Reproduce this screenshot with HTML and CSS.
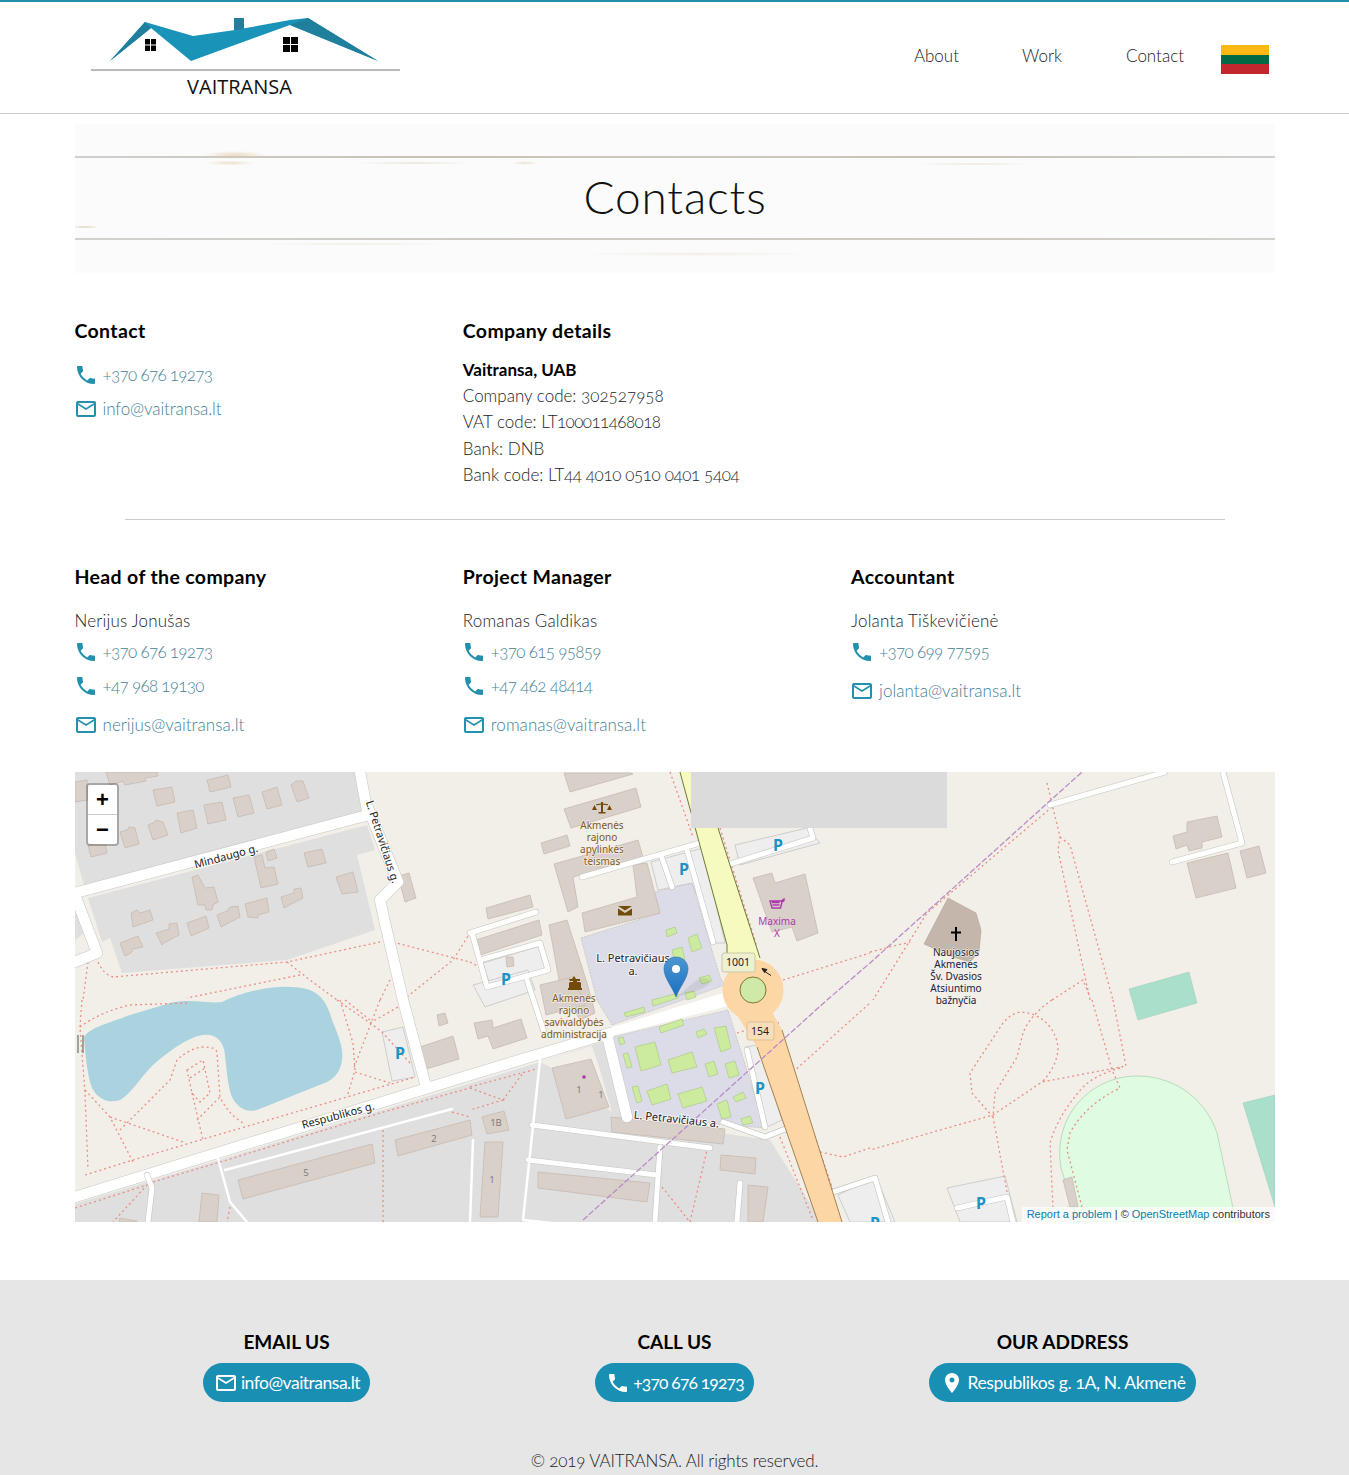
FILE: index.html
```html
<!DOCTYPE html>
<html lang="en">
<head>
<meta charset="utf-8">
<title>Contacts - Vaitransa</title>
<link rel="stylesheet" href="styles.css">
</head>
<body>
<svg class="defs" aria-hidden="true">
  <symbol id="i-phone" viewBox="0 0 24 24"><path d="M6.62 10.79c1.44 2.83 3.76 5.14 6.59 6.59l2.2-2.2c.27-.27.67-.36 1.02-.24 1.12.37 2.33.57 3.57.57.55 0 1 .45 1 1V20c0 .55-.45 1-1 1-9.39 0-17-7.61-17-17 0-.55.45-1 1-1h3.5c.55 0 1 .45 1 1 0 1.25.2 2.45.57 3.57.11.35.03.74-.25 1.02l-2.2 2.2z"/></symbol>
  <symbol id="i-mail" viewBox="0 0 24 24"><path d="M20 4H4c-1.1 0-1.99.9-1.99 2L2 18c0 1.1.9 2 2 2h16c1.1 0 2-.9 2-2V6c0-1.1-.9-2-2-2zm0 14H4V8l8 5 8-5v10zm-8-7L4 6h16l-8 5z"/></symbol>
  <symbol id="i-place" viewBox="0 0 24 24"><path d="M12 2C8.13 2 5 5.13 5 9c0 5.25 7 13 7 13s7-7.75 7-13c0-3.87-3.13-7-7-7zm0 9.5c-1.38 0-2.5-1.12-2.5-2.5s1.12-2.5 2.5-2.5 2.5 1.12 2.5 2.5-1.12 2.5-2.5 2.5z"/></symbol>
</svg>

<header class="site-header">
  <a class="logo" href="#">
    <svg class="logo-svg" viewBox="85 12 325 92" role="img" aria-label="Vaitransa">
      <rect class="logo-dark" x="234" y="18" width="10" height="13"/>
      <polygon class="logo-roof" points="145,22 193,36 235,30 290,20 308,18 378,61 290,25 191,61 151,28 110,61"/>
      <polygon class="logo-dark" points="110,61 145,22 151,28"/>
      <polygon class="logo-dark" points="290,25 308,18 378,61"/>
      <path class="logo-win" d="M145 39h5v5.500h-5zM151 39h5v5.500h-5zM145 45.500h5v5.500h-5zM151 45.500h5v5.500h-5zM283 37h7v7h-7zM291 37h7v7h-7zM283 45h7v7h-7zM291 45h7v7h-7z"/>
      <line class="logo-line" x1="91" y1="70" x2="400" y2="70"/>
      <text class="logo-text" x="239.500" y="94">VAITRANSA</text>
    </svg>
  </a>
  <nav class="nav">
    <a class="nav-link" href="#">About</a>
    <a class="nav-link" href="#">Work</a>
    <a class="nav-link" href="#">Contact</a>
    <span class="flag"><i class="flag-y"></i><i class="flag-g"></i><i class="flag-r"></i></span>
  </nav>
</header>

<main class="page">
  <section class="hero"><h1 class="hero-title">Contacts</h1></section>

  <section class="grid grid-top">
    <div class="col">
      <h3 class="col-title">Contact</h3>
      <a class="line line-num" href="#"><svg class="ico"><use href="#i-phone"/></svg>+370 676 19273</a>
      <a class="line" href="#"><svg class="ico"><use href="#i-mail"/></svg>info@vaitransa.lt</a>
    </div>
    <div class="col col-wide">
      <h3 class="col-title">Company details</h3>
      <p class="details"><strong>Vaitransa, UAB</strong><br>Company code: 302527958<br>VAT code: <span class="n-a">LT100011468018</span><br>Bank: DNB<br>Bank code: <span class="n-b">LT44 4010 0510 0401 5404</span></p>
    </div>
  </section>

  <hr class="divider">

  <section class="grid">
    <div class="col">
      <h3 class="col-title">Head of the company</h3>
      <p class="person">Nerijus Jonušas</p>
      <a class="line line-num" href="#"><svg class="ico"><use href="#i-phone"/></svg>+370 676 19273</a>
      <a class="line line-num" href="#"><svg class="ico"><use href="#i-phone"/></svg>+47 968 19130</a>
      <a class="line line-mail" href="#"><svg class="ico"><use href="#i-mail"/></svg>nerijus@vaitransa.lt</a>
    </div>
    <div class="col">
      <h3 class="col-title">Project Manager</h3>
      <p class="person">Romanas Galdikas</p>
      <a class="line line-num" href="#"><svg class="ico"><use href="#i-phone"/></svg>+370 615 95859</a>
      <a class="line line-num" href="#"><svg class="ico"><use href="#i-phone"/></svg>+47 462 48414</a>
      <a class="line line-mail" href="#"><svg class="ico"><use href="#i-mail"/></svg>romanas@vaitransa.lt</a>
    </div>
    <div class="col">
      <h3 class="col-title">Accountant</h3>
      <p class="person">Jolanta Tiškevičienė</p>
      <a class="line line-num" href="#"><svg class="ico"><use href="#i-phone"/></svg>+370 699 77595</a>
      <a class="line line-mail" href="#"><svg class="ico"><use href="#i-mail"/></svg>jolanta@vaitransa.lt</a>
    </div>
  </section>

  <section class="map">
    <svg class="map-svg" viewBox="75 772 1200 450" role="img" aria-label="Map">
      <rect class="m-land" x="75" y="772" width="1200" height="450"/>
      <!-- residential -->
      <polygon class="m-res" points="75,772 358,772 366,815 85,889 75,853"/>
      <polygon class="m-res" points="88,898 367,825 375,850 357,855 375,930 287,960 122,973 110,938 102,942"/>
      <polygon class="m-res" points="75,1204 540,1062 608,1040 630,1120 770,1140 822,1222 75,1222"/>
      <polygon class="m-res" points="75,893 88,930 75,940"/>
      <polygon class="m-land" points="540,1062 592,1046 600,1070 612,1112 552,1068"/>
      <!-- institutional -->
      <polygon class="m-inst" points="581,938 660,913 655,892 692,883 720,977 725,985 612,1025 597,1000"/>
      <polygon class="m-inst" points="612,1037 728,1010 765,1128 630,1117"/>
      <!-- water & sport -->
      <path class="m-water" d="M84 1037C90 1028 103 1025 130 1015L170 1003C190 998 210 1004 222 1002C245 990 285 982 310 990C322 995 328 1005 332 1020C338 1035 344 1048 342 1060C340 1074 333 1080 322 1084L257 1110C246 1113 238 1108 232 1097C227 1085 226 1058 224 1049C221 1038 212 1034 204 1035C190 1036 170 1050 152 1066C140 1078 130 1095 120 1100C108 1104 98 1099 92 1088C87 1075 85 1050 84 1037Z"/>
      <path class="m-stadium" d="M1078 1222L1061 1168C1052 1115 1092 1076 1137 1076C1180 1076 1208 1105 1217 1133L1236 1222Z"/>
      <polygon class="m-pitch" points="1129,989 1189,972 1197,1003 1138,1020"/>
      <polygon class="m-pitch" points="1243,1103 1275,1095 1275,1207"/>
      <!-- parking -->
      <g class="m-lot">
        <polygon points="382,1032 403,1027 415,1077 392,1081"/>
        <polygon points="483,963 540,946 546,968 490,985"/>
        <polygon points="473,985 528,970 535,990 485,1007"/>
        <polygon points="735,845 807,828 820,843 740,865"/>
        <polygon points="651,862 703,848 725,943 715,943 692,883 658,890"/>
        <polygon points="745,1047 758,1045 782,1120 765,1128"/>
        <polygon points="947,1188 1005,1176 1017,1222 960,1222"/>
        <polygon points="838,1195 876,1177 895,1222 850,1222"/>
      </g>
      <!-- footways -->
      <path class="m-path" d="M98 962Q104 975 113 977L287 962L380 942M393 942L470 962M407 997L453 960L470 933M287 962L310 980L337 1000M300 975L187 998M88 962L83 1000M390 980L380 1000M82 1000L80 1027L85 1093L88 1170M80 1027Q100 1012 130 1005L187 1003M85 1090L110 1117L133 1162M110 1117L183 1142M120 1130L170 1080L177 1060Q190 1048 203 1047Q217 1047 217 1053L220 1097Q228 1114 243 1123M187 1070L203 1060L210 1093L200 1102L192 1093Z M190 1078L205 1068M192 1093L203 1140M197 1120L220 1097M85 1175L133 1160L207 1138L347 1097L415 1077M340 1000L353 1043L355 1070L347 1097M355 1072L390 1083M380 1000L353 1070M337 1000L370 1023L382 1032L410 1063M370 1023L398 1007M153 1182L217 1163L380 1113L470 1088M75 1208L147 1185L113 1222M383 1130L383 1222M230 1207L227 1222M452 1112L470 1117M470 1087L540 1068M470 1088L503 1100L470 1110M503 1100L523 1073M662 1187L690 1222L707 1150M780 1137L813 1220M778 1022L793 1072L833 1190M793 1072L870 1003M820 1152L843 1157L870 1148M737 1033L747 1030M670 772L693 837M720 828L757 947M783 980L870 953M1047 783L1060 837L1058 850L1090 1000M1060 837L1070 845L1113 1000M1052 807L927 913L873 1000M870 952L910 942M1052 1000L1083 980L1090 997M1092 1000L1112 1070L1120 1088Q1085 1105 1070 1133L1067 1150L1082 1207M1113 1000L1126 1066L1042 1082L993 1115L870 1150M1120 1068Q1095 1075 1083 1087Q1058 1115 1050 1143L1053 1207M1052 1000Q1030 1015 1023 1033L1017 1057L995 1093L993 1117L1007 1192M993 1117L972 1093L970 1073L1003 1023Q1012 1012 1022 1012Q1040 1014 1050 1027Q1058 1038 1058 1050Q1056 1068 1042 1082M470 962L485 970M345 1000L370 1020"/>
      <!-- buildings -->
      <g class="m-bld">
        <polygon points="75,782 87,780 88,800 75,802"/>
        <polygon points="106,772 157,772 158,776 145,778 146,781 125,785 123,781 110,785"/>
        <polygon points="153,790 172,787 175,802 157,806"/>
        <polygon points="177,813 193,810 197,828 181,833"/>
        <polygon points="204,805 222,802 226,820 208,824"/>
        <polygon points="233,798 249,795 254,813 238,817"/>
        <polygon points="262,792 277,787 282,805 267,809"/>
        <polygon points="291,785 296,781 303,781 309,798 297,802"/>
        <polygon points="207,780 228,775 231,787 210,792"/>
        <polygon points="148,825 153,823 156,820 163,822 168,835 153,840"/>
        <polygon points="120,832 127,830 129,827 135,828 139,844 125,848"/>
        <polygon points="88,845 105,842 107,853 91,857"/>
        <polygon points="192,877 198,875 205,888 214,887 218,902 213,905 212,910 206,910 205,905 198,905"/>
        <polygon points="254,857 262,855 265,868 274,867 278,884 261,888"/>
        <polygon points="266,852 274,849 277,858 268,861"/>
        <polygon points="304,853 322,849 326,863 308,867"/>
        <polygon points="336,877 353,872 358,892 342,894"/>
        <polygon points="398,876 409,873 416,898 405,902"/>
        <polygon points="131,913 137,910 140,913 150,910 153,920 133,927"/>
        <polygon points="120,943 138,936 143,947 133,949 131,953 125,956"/>
        <polygon points="156,933 169,929 169,924 177,923 179,935 164,943 162,945"/>
        <polygon points="187,923 201,918 206,916 209,928 191,936"/>
        <polygon points="217,915 227,911 230,907 238,906 240,917 221,927"/>
        <polygon points="245,904 267,898 269,912 258,915 258,918 248,917"/>
        <polygon points="281,897 294,893 294,889 301,888 303,898 284,908"/>
        <polygon points="564,773 631,773 633,774 570,792"/>
        <polygon points="564,809 636,788 641,807 571,828"/>
        <polygon points="541,843 567,835 570,846 544,854"/>
        <polygon points="554,864 575,858 638,840 643,857 573,877 578,907 568,912"/>
        <polygon points="582,913 637,897 633,865 647,863 660,913 585,932"/>
        <polygon points="486,908 530,895 533,907 488,919"/>
        <polygon points="476,940 539,920 542,935 480,955"/>
        <polygon points="549,925 567,920 587,983 595,1013 580,1020 560,985"/>
        <polygon points="540,985 573,977 585,1005 546,1015"/>
        <polygon points="506,957 513,957 514,966 507,967"/>
        <polygon points="753,878 772,873 775,883 805,874 818,933 797,941 792,927 772,932"/>
        <polygon points="474,1023 492,1020 493,1028 521,1019 527,1038 493,1049 488,1036 478,1039"/>
        <polygon points="420,1047 453,1036 459,1059 423,1070"/>
        <polygon points="437,1015 445,1013 448,1023 439,1026"/>
        <polygon points="552,1068 591,1059 609,1107 566,1119"/>
        <polygon points="482,1117 504,1111 509,1130 487,1134"/>
        <polygon points="485,1142 503,1142 498,1217 480,1217"/>
        <polygon points="611,1117 725,1129 723,1144 612,1132"/>
        <polygon points="538,1172 650,1183 647,1202 538,1188"/>
        <polygon points="721,1155 756,1158 755,1174 720,1170"/>
        <polygon points="748,1185 768,1187 763,1222 748,1222"/>
        <polygon points="395,1140 470,1120 472,1135 398,1156"/>
        <polygon points="238,1180 372,1144 375,1163 243,1199"/>
        <polygon points="202,1193 219,1195 217,1222 199,1222"/>
        <polygon points="120,1218 137,1221 137,1222 119,1222"/>
        <polygon points="1173,836 1187,832 1187,822 1217,816 1222,837 1202,842 1202,848 1189,851 1187,845 1176,849"/>
        <polygon points="1187,863 1228,853 1236,888 1196,898"/>
        <polygon points="1240,851 1259,846 1266,873 1247,878"/>
        <polygon points="1063,1180 1072,1177 1078,1207 1070,1207"/>
      </g>
      <polygon class="m-church" points="948,898 976,913 981,930 979,952 970,962 953,957 924,944"/>
      <!-- grass patches -->
      <g class="m-grass">
        <polygon points="624,1013 644,1007 645,1012 626,1017"/><polygon points="652,1000 678,993 678,998 653,1006"/>
        <polygon points="659,1027 682,1019 684,1025 661,1033"/><polygon points="696,1032 704,1029 707,1034 698,1038"/>
        <polygon points="714,1028 726,1026 731,1048 721,1052"/><polygon points="618,1038 623,1037 625,1043 620,1045"/>
        <polygon points="623,1054 628,1053 632,1067 627,1068"/><polygon points="635,1047 655,1042 661,1065 641,1071"/>
        <polygon points="668,1060 692,1052 697,1067 672,1073"/><polygon points="705,1064 714,1061 718,1074 709,1077"/>
        <polygon points="725,1064 735,1061 739,1075 729,1078"/><polygon points="632,1087 638,1086 642,1101 637,1103"/>
        <polygon points="647,1091 667,1084 671,1099 652,1105"/><polygon points="678,1094 702,1087 707,1101 683,1108"/>
        <polygon points="717,1104 727,1100 731,1117 722,1119"/><polygon points="733,1097 743,1092 746,1098 736,1102"/>
        <polygon points="741,1119 750,1116 753,1123 743,1125"/><polygon points="666,930 675,927 677,933 667,937"/>
        <polygon points="688,938 697,934 702,948 692,952"/><polygon points="672,950 682,947 685,960 675,963"/>
        <polygon points="699,978 709,975 712,981 702,984"/><polygon points="685,993 694,991 696,997 687,1000"/>
      </g>
      <!-- white roads -->
      <path class="m-case m-w11" d="M75 893L368 815M360 772L368 815M368 808L398 882L380 900L385 923L403 1000L425 1083M75 1197L470 1075L610 1033M75 895L97 953L75 962M607 1035L627 1117"/>
      <path class="m-road m-w10" d="M75 893L368 815M360 772L368 815M368 808L398 882L380 900L385 923L403 1000L425 1083M75 1197L470 1075L610 1033M75 895L97 953L75 962M607 1035L627 1117"/>
      <path class="m-road m-taper" d="M610 1028L726 992L728 1006L612 1036Z"/>
      <path class="m-case m-w6" d="M470 933L536 912M472 933L487 987L548 970L540 943L480 960M527 980L545 1035M582 877L700 843M727 865L813 838L810 828M662 858L672 887M687 850L713 942M723 1122L765 1137L788 1128M532 1125L710 1148M528 1160L657 1175M660 1147L655 1222M740 1183L737 1222M147 1175L152 1188L148 1222M1050 805L1165 772M1223 772L1242 843L1172 862M957 1208L1007 1197L1013 1222M830 1193L875 1178L888 1222M747 1050L765 1127"/>
      <path class="m-road m-w5" d="M470 933L536 912M472 933L487 987L548 970L540 943L480 960M527 980L545 1035M582 877L700 843M727 865L813 838L810 828M662 858L672 887M687 850L713 942M723 1122L765 1137L788 1128M532 1125L710 1148M528 1160L657 1175M660 1147L655 1222M740 1183L737 1222M147 1175L152 1188L148 1222M1050 805L1165 772M1223 772L1242 843L1172 862M957 1208L1007 1197L1013 1222M830 1193L875 1178L888 1222M747 1050L765 1127"/>
      <path class="m-road m-w3" d="M540 1060L523 1220L570 1225M452 1109L225 1170M217 1155L230 1202L247 1222M473 1140L470 1222"/>
      <!-- classified roads -->
      <polygon class="m-tert" points="680,772 702,772 718,828 762,965 727,965 727,945"/>
      <path class="m-tert-edge" d="M680 772L727 945L727 958M702 772L718 828L760 958"/>
      <polygon class="m-trunk-fill" points="735,1012 772,1012 782,1030 842,1222 818,1222 757,1047"/>
      <path class="m-trunk-edge" d="M757 1047L818 1222M782 1030L842 1222"/>
      <circle class="m-ring" cx="753" cy="990" r="30.500"/>
      <circle class="m-round" cx="753" cy="990" r="13"/>
      <rect class="m-tile" x="691" y="772" width="256" height="56"/>
      <path class="m-power" d="M583 1220L827 1000L870 963L1082 772"/>
      <!-- bridge -->
      <path class="m-bridge" d="M78 1035V1053M83 1035V1053"/>
      <!-- icons -->
      <g class="m-brown">
        <path d="M601 802h2v1.500l5 .8v1l-5-.5v7.200h2.500v1.500h-7v-1.500h2.500v-7.200l-5 .5v-1l5-.8zM594.500 805l-2.500 5h5zM609.500 805l-2.500 5h5z"/>
        <path d="M618 906h14l-7 4.500zM618 908.500l7 4.500 7-4.500v7h-14z"/>
        <path d="M574 976l2 3h4v2l-3 0v1h3l1 1v5h1v2h-14v-2h1v-5l1-1h3v-1h-3l-1-2h3z"/>
      </g>
      <path class="m-cart" d="M770 901h11l3-2v1.500l-2 1.300-1.500 6.200h-8.500zM772 902.500h7.500M772.500 905h7"/>
      <circle class="m-purple" cx="584" cy="1077" r="1.800"/>
      <path class="m-cross" d="M955 927h2v4.500h4v2h-4v7.500h-2v-7.500h-4v-2h4z"/>
      <path class="m-arrow" d="M771 975.500L764 971M762 968.500l5 1-2.500 3z"/>
      <!-- P labels -->
      <g class="m-p">
        <text x="684" y="875">P</text><text x="778" y="851">P</text><text x="506" y="985">P</text>
        <text x="760" y="1094">P</text><text x="400" y="1059">P</text><text x="981" y="1209">P</text>
        <text x="875" y="1229">P</text>
      </g>
      <!-- street labels -->
      <g class="m-street">
        <text transform="translate(227 860) rotate(-15)">Mindaugo g.</text>
        <text transform="translate(379 843) rotate(72)">L. Petravičiaus g.</text>
        <text transform="translate(339 1119) rotate(-15)">Respublikos g.</text>
        <text transform="translate(676 1123) rotate(6)">L. Petravičiaus a.</text>
        <text x="633" y="962">L. Petravičiaus</text>
        <text x="633" y="975">a.</text>
      </g>
      <g class="m-amenity">
        <text x="602" y="829">Akmenės</text><text x="602" y="841">rajono</text><text x="602" y="853">apylinkės</text><text x="602" y="865">teismas</text>
        <text x="574" y="1002">Akmenės</text><text x="574" y="1014">rajono</text><text x="574" y="1026">savivaldybės</text><text x="574" y="1038">administracija</text>
      </g>
      <g class="m-shop"><text x="777" y="925">Maxima</text><text x="777" y="937">X</text></g>
      <g class="m-worship">
        <text x="956" y="956">Naujosios</text><text x="956" y="968">Akmenės</text><text x="956" y="980">Šv. Dvasios</text><text x="956" y="992">Atsiuntimo</text><text x="956" y="1004">bažnyčia</text>
      </g>
      <g class="m-num">
        <text x="579" y="1093">1</text><text x="601" y="1098">1</text><text x="434" y="1142">2</text><text x="306" y="1176">5</text><text x="496" y="1126">1B</text><text x="492" y="1183">1</text>
      </g>
      <!-- shields -->
      <rect class="m-sh1" x="722" y="953" width="33" height="19" rx="2"/>
      <text class="m-shtxt" x="738" y="966">1001</text>
      <rect class="m-sh2" x="747" y="1022" width="27" height="18" rx="2"/>
      <text class="m-shtxt" x="760" y="1035">154</text>
    </svg>
    <svg class="marker" viewBox="0 0 60 44" aria-hidden="true">
      <path class="marker-shadow" d="M13 41L34 24C40 20 50 22 46 28C43 32 30 37 13 41Z"/>
      <defs><linearGradient id="mk" x1="0" y1="0" x2="0" y2="1"><stop offset="0" stop-color="#4b97d2"/><stop offset="1" stop-color="#1a6fc0"/></linearGradient></defs>
      <path class="marker-body" d="M13 41C10 32 1 22 1 13C1 6 6 1 13 1C20 1 25 6 25 13C25 22 16 32 13 41Z"/>
      <circle class="marker-dot" cx="13" cy="13" r="4"/>
    </svg>
    <div class="zoom"><a class="zoom-btn" href="#">+</a><a class="zoom-btn" href="#">−</a></div>
    <div class="attrib"><a href="#">Report a problem</a> | © <a href="#">OpenStreetMap</a> contributors</div>
  </section>
</main>

<footer class="footer">
  <div class="foot-grid">
    <div class="foot-col">
      <h4 class="foot-title">EMAIL US</h4>
      <a class="pill pill-mail" href="#"><svg class="ico"><use href="#i-mail"/></svg>info@vaitransa.lt</a>
    </div>
    <div class="foot-col">
      <h4 class="foot-title">CALL US</h4>
      <a class="pill pill-num" href="#"><svg class="ico"><use href="#i-phone"/></svg>+370 676 19273</a>
    </div>
    <div class="foot-col">
      <h4 class="foot-title">OUR ADDRESS</h4>
      <a class="pill pill-addr" href="#"><svg class="ico"><use href="#i-place"/></svg>Respublikos g. 1A, N. Akmenė</a>
    </div>
  </div>
  <p class="copy">© 2019 VAITRANSA. All rights reserved.</p>
</footer>
</body>
</html>
```
FILE: styles.css
```css
* { box-sizing: border-box; }
html, body { margin: 0; padding: 0; }
body {
  font-family: Lato, "Open Sans", sans-serif;
  font-weight: 300;
  font-size: 17px;
  color: #222;
  background: #fff;
  font-feature-settings: "onum" 1;
}
a { text-decoration: none; color: inherit; }
.defs { position: absolute; width: 0; height: 0; }

.site-header {
  height: 114px;
  border-top: 2px solid #2391ae;
  border-bottom: 1px solid #ccc;
  display: flex;
  align-items: flex-start;
  justify-content: space-between;
  padding: 0 80px 0 85px;
}
.logo { display: block; height: 92px; margin-top: 10px; }
.logo-svg { display: block; width: 325px; height: 92px; }
.logo-roof { fill: #1a93b8; }
.logo-dark { fill: #1f7f9c; }
.logo-win { fill: #000; }
.logo-line { stroke: #777; stroke-width: 1.200; }
.logo-text { font-family: "Open Sans", sans-serif; font-weight: 400; font-size: 20px; text-anchor: middle; fill: #111; font-feature-settings: normal; }

.nav { display: flex; align-items: flex-start; padding-top: 42px; }
.nav-link { display: block; padding: 0 32px; line-height: 24px; font-size: 17px; color: #222; }
.nav-link:first-child { margin-right: -1px; }
.flag { display: flex; flex-direction: column; width: 48px; height: 29px; margin: 1px 0 0 5px; }
.flag i { display: block; flex: 1; }
.flag-y { background: #fdb913; }
.flag-g { background: #006a44; }
.flag-r { background: #c1272d; }

.page { width: 1200px; margin: 10px 0 0 75px; }

.hero {
  height: 149px;
  padding-bottom: 4px;
  display: flex;
  align-items: center;
  justify-content: center;
  background-color: #fbfbfb;
  background-image:
    radial-gradient(ellipse 32px 4px at 160px 31px, rgba(222,196,160,.6), transparent),
    radial-gradient(ellipse 24px 2.500px at 155px 39px, rgba(222,196,160,.5), transparent),
    radial-gradient(ellipse 60px 1.500px at 340px 39px, rgba(215,200,175,.45), transparent),
    radial-gradient(ellipse 14px 2px at 450px 39px, rgba(222,196,160,.45), transparent),
    radial-gradient(ellipse 14px 1.500px at 10px 103px, rgba(200,180,150,.6), transparent),
    radial-gradient(ellipse 60px 1.500px at 900px 40px, rgba(215,200,175,.4), transparent),
    radial-gradient(ellipse 100px 1.500px at 280px 120px, rgba(222,205,180,.35), transparent),
    radial-gradient(ellipse 120px 2px at 620px 130px, rgba(222,210,190,.35), transparent),
    linear-gradient(90deg, #d0cfcc, #c8c2b6 30%, #cdc8be 50%, #c8c2b6 75%, #d0cfcc),
    linear-gradient(90deg, #d2d1ce, #cdc9c2 40%, #cfcabf 75%, #d2d1ce);
  background-repeat: no-repeat;
  background-size: auto, auto, auto, auto, auto, auto, auto, auto, 100% 2px, 100% 2px;
  background-position: 0 0, 0 0, 0 0, 0 0, 0 0, 0 0, 0 0, 0 0, 0 32px, 0 114px;
}
.hero-title {
  margin: 0;
  font-size: 46px;
  font-weight: 300;
  line-height: 56px;
  color: #111;
  letter-spacing: .85px;
}

.grid { display: grid; grid-template-columns: repeat(3, 388.300px); margin-left: -.5px; }
.grid-top { margin-top: 46px; }
.col-title { margin: 0; font-size: 19.500px; font-weight: 700; line-height: 24px; letter-spacing: .35px; color: #000; }
.line {
  display: flex;
  align-items: center;
  height: 34px;
  padding-bottom: 2px;
  font-size: 17px;
  letter-spacing: -.1px;
  color: #3f8196;
}
.line-num { letter-spacing: -.68px; }
.ico { width: 24px; height: 24px; margin-right: 4px; fill: currentColor; flex: none; }
.line .ico { fill: #2391ae; margin-left: -1px; margin-right: 5px; margin-top: 2px; }
.col > .line:first-of-type { margin-top: 15px; }
.details { margin: 14px 0 0; font-size: 17px; line-height: 26.200px; color: #222; }
.details strong { font-weight: 700; color: #000; }
.n-a { letter-spacing: -.55px; }
.n-b { letter-spacing: -.38px; }
.divider { border: 0; border-top: 1px solid #ccc; margin: 31px 50px 45px; height: 0; }
.person { margin: 19px 0 0; line-height: 26px; font-size: 17px; letter-spacing: .18px; color: #222; }
.col > .person + .line { margin-top: 1px; }
.line-mail { margin-top: 5px; letter-spacing: .04px; }

.map { position: relative; height: 450px; margin-top: 30px; overflow: hidden; }
.map-svg { display: block; width: 1200px; height: 450px; font-family: "Noto Sans", sans-serif; font-feature-settings: normal; font-weight: 400; }
.m-land { fill: #f2efe9; }
.m-res { fill: #e0dfdf; }
.m-inst { fill: #dcdce8; stroke: #b8b8b0; stroke-width: .6; stroke-dasharray: 2 1; }
.m-water { fill: #aad3df; }
.m-stadium { fill: #dffce2; stroke: #b8dcb8; stroke-width: 1; }
.m-pitch { fill: #aae0cb; stroke: #95cdb6; stroke-width: .5; }
.m-lot polygon { fill: #eeeeee; stroke: #c4c4c4; stroke-width: .8; }
.m-path { fill: none; stroke: #ea8d82; stroke-width: 1.300; stroke-dasharray: 2 3; }
.m-bld polygon { fill: #d9d0c9; stroke: #c6bab1; stroke-width: .8; }
.m-church { fill: #c4b6ab; stroke: #b0a294; stroke-width: .6; }
.m-grass polygon { fill: #cdeb9f; stroke: #a4c47e; stroke-width: .6; }
.m-case, .m-road { fill: none; stroke-linecap: round; stroke-linejoin: round; }
.m-case { stroke: #c6c6c2; }
.m-road { stroke: #fff; }
.m-w11 { stroke-width: 11.500; }
.m-w10 { stroke-width: 10.500; }
.m-w6 { stroke-width: 6.200; }
.m-w5 { stroke-width: 5; }
.m-w3 { stroke-width: 2.500; }
.m-taper { fill: #fff; stroke: none; }
.m-trunk-fill { fill: #fcd6a4; }
.m-trunk-edge { fill: none; stroke: #a5804e; stroke-width: 1; }
.m-ring { fill: #fcd6a4; }
.m-tert { fill: #f7fabf; }
.m-tert-edge { fill: none; stroke: #6d7a36; stroke-width: 1; }
.m-round { fill: #cfe9a8; stroke: #7d7a30; stroke-width: 1; }
.m-tile { fill: #dbdbdb; }
.m-power { fill: none; stroke: #b98bc9; stroke-width: 1.300; stroke-dasharray: 6 2; }
.m-bridge { fill: none; stroke: #555; stroke-width: 1; }
.m-brown { fill: #734a08; }
.m-cart { fill: none; stroke: #ac39ac; stroke-width: 1.400; }
.m-purple { fill: #ac39ac; }
.m-cross { fill: #000; }
.m-arrow { fill: #222; stroke: #222; stroke-width: 1; }
.m-p text { font-size: 16px; font-weight: 700; fill: #1c93c4; text-anchor: middle; font-family: "Noto Sans", sans-serif; }
.m-street text { font-size: 11px; fill: #222; text-anchor: middle; paint-order: stroke; stroke: #fff; stroke-width: 2; stroke-opacity: .7; }
.m-amenity text { font-size: 10px; fill: #7d5a20; text-anchor: middle; paint-order: stroke; stroke: #f2efe9; stroke-width: 1.500; }
.m-shop text { font-size: 10px; fill: #ac39ac; text-anchor: middle; }
.m-worship text { font-size: 10px; fill: #20203f; text-anchor: middle; paint-order: stroke; stroke: #f2efe9; stroke-width: 1.200; }
.m-num text { font-size: 9.500px; fill: #7c7c7c; text-anchor: middle; }
.m-sh1 { fill: #eef0cf; stroke: #c9c9a8; stroke-width: 1; }
.m-sh2 { fill: #f7deb9; stroke: #d9c09a; stroke-width: 1; }
.m-shtxt { font-size: 10.500px; fill: #222; text-anchor: middle; }

.marker { position: absolute; left: 588px; top: 184px; width: 60px; height: 44px; overflow: visible; }
.marker-shadow { fill: rgba(0,0,0,.07); }
.marker-body { fill: url(#mk); stroke: #2a6ea8; stroke-width: .6; }
.marker-dot { fill: #fff; }

.zoom {
  position: absolute;
  left: 11px;
  top: 11px;
  width: 33px;
  border: 2px solid rgba(0,0,0,.25);
  border-radius: 4px;
  background-clip: padding-box;
}
.zoom-btn {
  display: block;
  height: 29px;
  text-align: center;
  font: 700 22px/29px "Liberation Sans", sans-serif;
  color: #000;
  background: #fff;
}
.zoom-btn:first-child { border-bottom: 1px solid #ccc; border-radius: 2px 2px 0 0; height: 30px; }
.zoom-btn:last-child { border-radius: 0 0 2px 2px; }
.attrib {
  position: absolute;
  right: 0;
  bottom: 0;
  padding: 0 5px;
  font: 400 11px/15px "Liberation Sans", sans-serif;
  color: #333;
  background: rgba(255,255,255,.7);
  font-feature-settings: normal;
}
.attrib a { color: #0b7ca8; }

.footer { margin-top: 58px; height: 195px; background: #e6e6e6; padding-top: 50px; }
.foot-grid { display: grid; grid-template-columns: repeat(3, 388px); justify-content: center; }
.foot-col { display: flex; flex-direction: column; align-items: center; }
.foot-title { margin: 0 0 9px; font-size: 19px; font-weight: 700; line-height: 24px; color: #000; }
.pill {
  display: inline-flex;
  align-items: center;
  height: 39px;
  padding: 0 10px 0 11px;
  border-radius: 20px;
  background: #1a8fb4;
  color: #fff;
  font-size: 17.500px;
  font-weight: 400;
}
.pill-mail { letter-spacing: -.5px; }
.pill-num { letter-spacing: -.85px; }
.pill-addr { letter-spacing: -.33px; }
.pill .ico { fill: #fff; margin-right: 3px; }
.copy { margin: 47px 0 0; text-align: center; font-size: 17px; line-height: 24px; letter-spacing: -.15px; color: #222; }
```
